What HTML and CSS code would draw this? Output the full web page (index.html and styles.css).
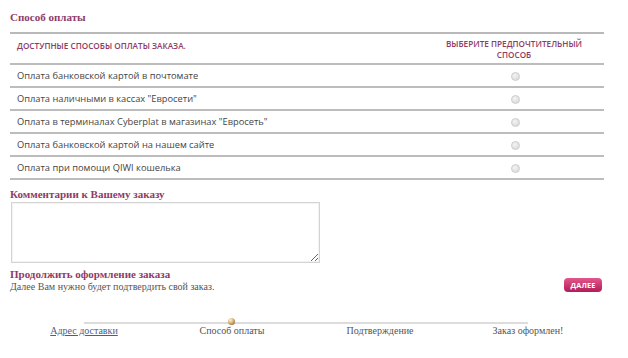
FILE: index.html
```html
<!DOCTYPE html>
<html lang="ru">
<head>
  <meta charset="UTF-8" />
  <title>Способ оплаты</title>
  <link rel="stylesheet" href="styles.css">
</head>
<body>

  <div class="page">
    <h3 class="title">Способ оплаты</h3>

    <table class="methods">
      <tr class="head">
        <th class="name">ДОСТУПНЫЕ СПОСОБЫ ОПЛАТЫ ЗАКАЗА.</th>
        <th class="pick">ВЫБЕРИТЕ ПРЕДПОЧТИТЕЛЬНЫЙ<br>СПОСОБ</th>
      </tr>
      <tr>
        <td class="name">Оплата банковской картой в почтомате</td>
        <td class="pick"><span class="radio"></span></td>
      </tr>
      <tr>
        <td class="name">Оплата наличными в кассах "Евросети"</td>
        <td class="pick"><span class="radio"></span></td>
      </tr>
      <tr>
        <td class="name">Оплата в терминалах Cyberplat в магазинах "Евросеть"</td>
        <td class="pick"><span class="radio"></span></td>
      </tr>
      <tr>
        <td class="name">Оплата банковской картой на нашем сайте</td>
        <td class="pick"><span class="radio"></span></td>
      </tr>
      <tr>
        <td class="name">Оплата при помощи QIWI кошелька</td>
        <td class="pick"><span class="radio"></span></td>
      </tr>
    </table>

    <h3 class="title comment-title">Комментарии к Вашему заказу</h3>
    <textarea class="comment"></textarea>

    <div class="next">
      <div>
        <h3 class="title">Продолжить оформление заказа</h3>
        <p class="note">Далее Вам нужно будет подтвердить свой заказ.</p>
      </div>
      <button class="btn">ДАЛЕЕ</button>
    </div>

    <div class="steps">
      <div class="track"></div>
      <div class="step"><a href="#">Адрес доставки</a></div>
      <div class="step current"><span class="dot"></span>Способ оплаты</div>
      <div class="step">Подтверждение</div>
      <div class="step">Заказ оформлен!</div>
    </div>
  </div>

</body>
</html>
```

FILE: styles.css
```css
body {
  margin: 0;
  background: #fff;
  font-family: "Liberation Serif", serif;
  color: #555;
}

.page {
  padding: 10px 24px 0 10px;
}

.title {
  margin: 0;
  font-family: "Liberation Serif", serif;
  font-size: 11px;
  line-height: 14px;
  font-weight: bold;
  color: #8e3c66;
}

/* payment table */
.methods {
  width: 100%;
  margin-top: 8px;
  border-collapse: collapse;
  border-top: 2px solid #b9b9b9;
  font-family: "Open Sans", sans-serif;
  font-size: 9.3px;
}
.methods tr {
  border-bottom: 2px solid #bcbcbc;
}
.methods .head {
  height: 31px;
}
.methods th {
  padding: 0;
  font-weight: 600;
  color: #8e3c66;
  font-size: 8.2px;
  line-height: 11px;
}
.methods th.name {
  text-align: left;
  vertical-align: top;
  padding: 6px 0 0 7px;
}
.methods th.pick {
  vertical-align: middle;
  padding-top: 1px;
}
.methods td {
  height: 21px;
  color: #444;
  padding: 0;
}
.methods td.name {
  padding-left: 7px;
}
.methods .pick {
  width: 180px;
  text-align: center;
}

.radio {
  display: inline-block;
  width: 7px;
  height: 7px;
  border-radius: 50%;
  border: 1px solid #cfcfcf;
  background: radial-gradient(circle at 40% 35%, #f4f4f4, #d4d4d4);
  vertical-align: middle;
  margin-left: 2px;
}

/* comment */
.comment-title {
  margin-top: 7px;
}
.comment {
  display: block;
  box-sizing: border-box;
  width: 309px;
  height: 61px;
  padding: 0;
  margin: 1px 0 0 1px;
  border: 1px solid #d4d4d4;
  box-shadow: inset 0 0 0 1px #f3f3f3;
  resize: both;
}

/* continue */
.next {
  display: flex;
  justify-content: space-between;
  align-items: flex-end;
  margin-top: 4px;
}
.note {
  margin: 0;
  font-size: 10px;
  line-height: 12px;
  color: #555;
}
.btn {
  width: 38px;
  height: 14px;
  padding: 0;
  margin-bottom: 1px;
  margin-right: 2px;
  border: none;
  border-radius: 4px;
  background: linear-gradient(#e2588c, #b21c57);
  color: #fff;
  font-family: "Open Sans", sans-serif;
  font-size: 7.3px;
  font-weight: bold;
  letter-spacing: 0.2px;
}

/* step progress */
.steps {
  position: relative;
  display: flex;
  width: 592px;
  margin-top: 29px;
  font-size: 10px;
}
.track {
  position: absolute;
  left: 74px;
  right: 74px;
  top: 0;
  height: 2px;
  background: #dcdcdc;
}
.step {
  position: relative;
  flex: 1;
  text-align: center;
  padding-top: 3px;
  color: #555;
}
.step a {
  color: #46608c;
}
.dot {
  position: absolute;
  left: 50%;
  top: -4px;
  width: 7px;
  height: 7px;
  margin-left: -4px;
  border-radius: 50%;
  background: radial-gradient(circle at 35% 30%, #fff3d8, #d4a76a 50%, #6e4a25);
}
```
